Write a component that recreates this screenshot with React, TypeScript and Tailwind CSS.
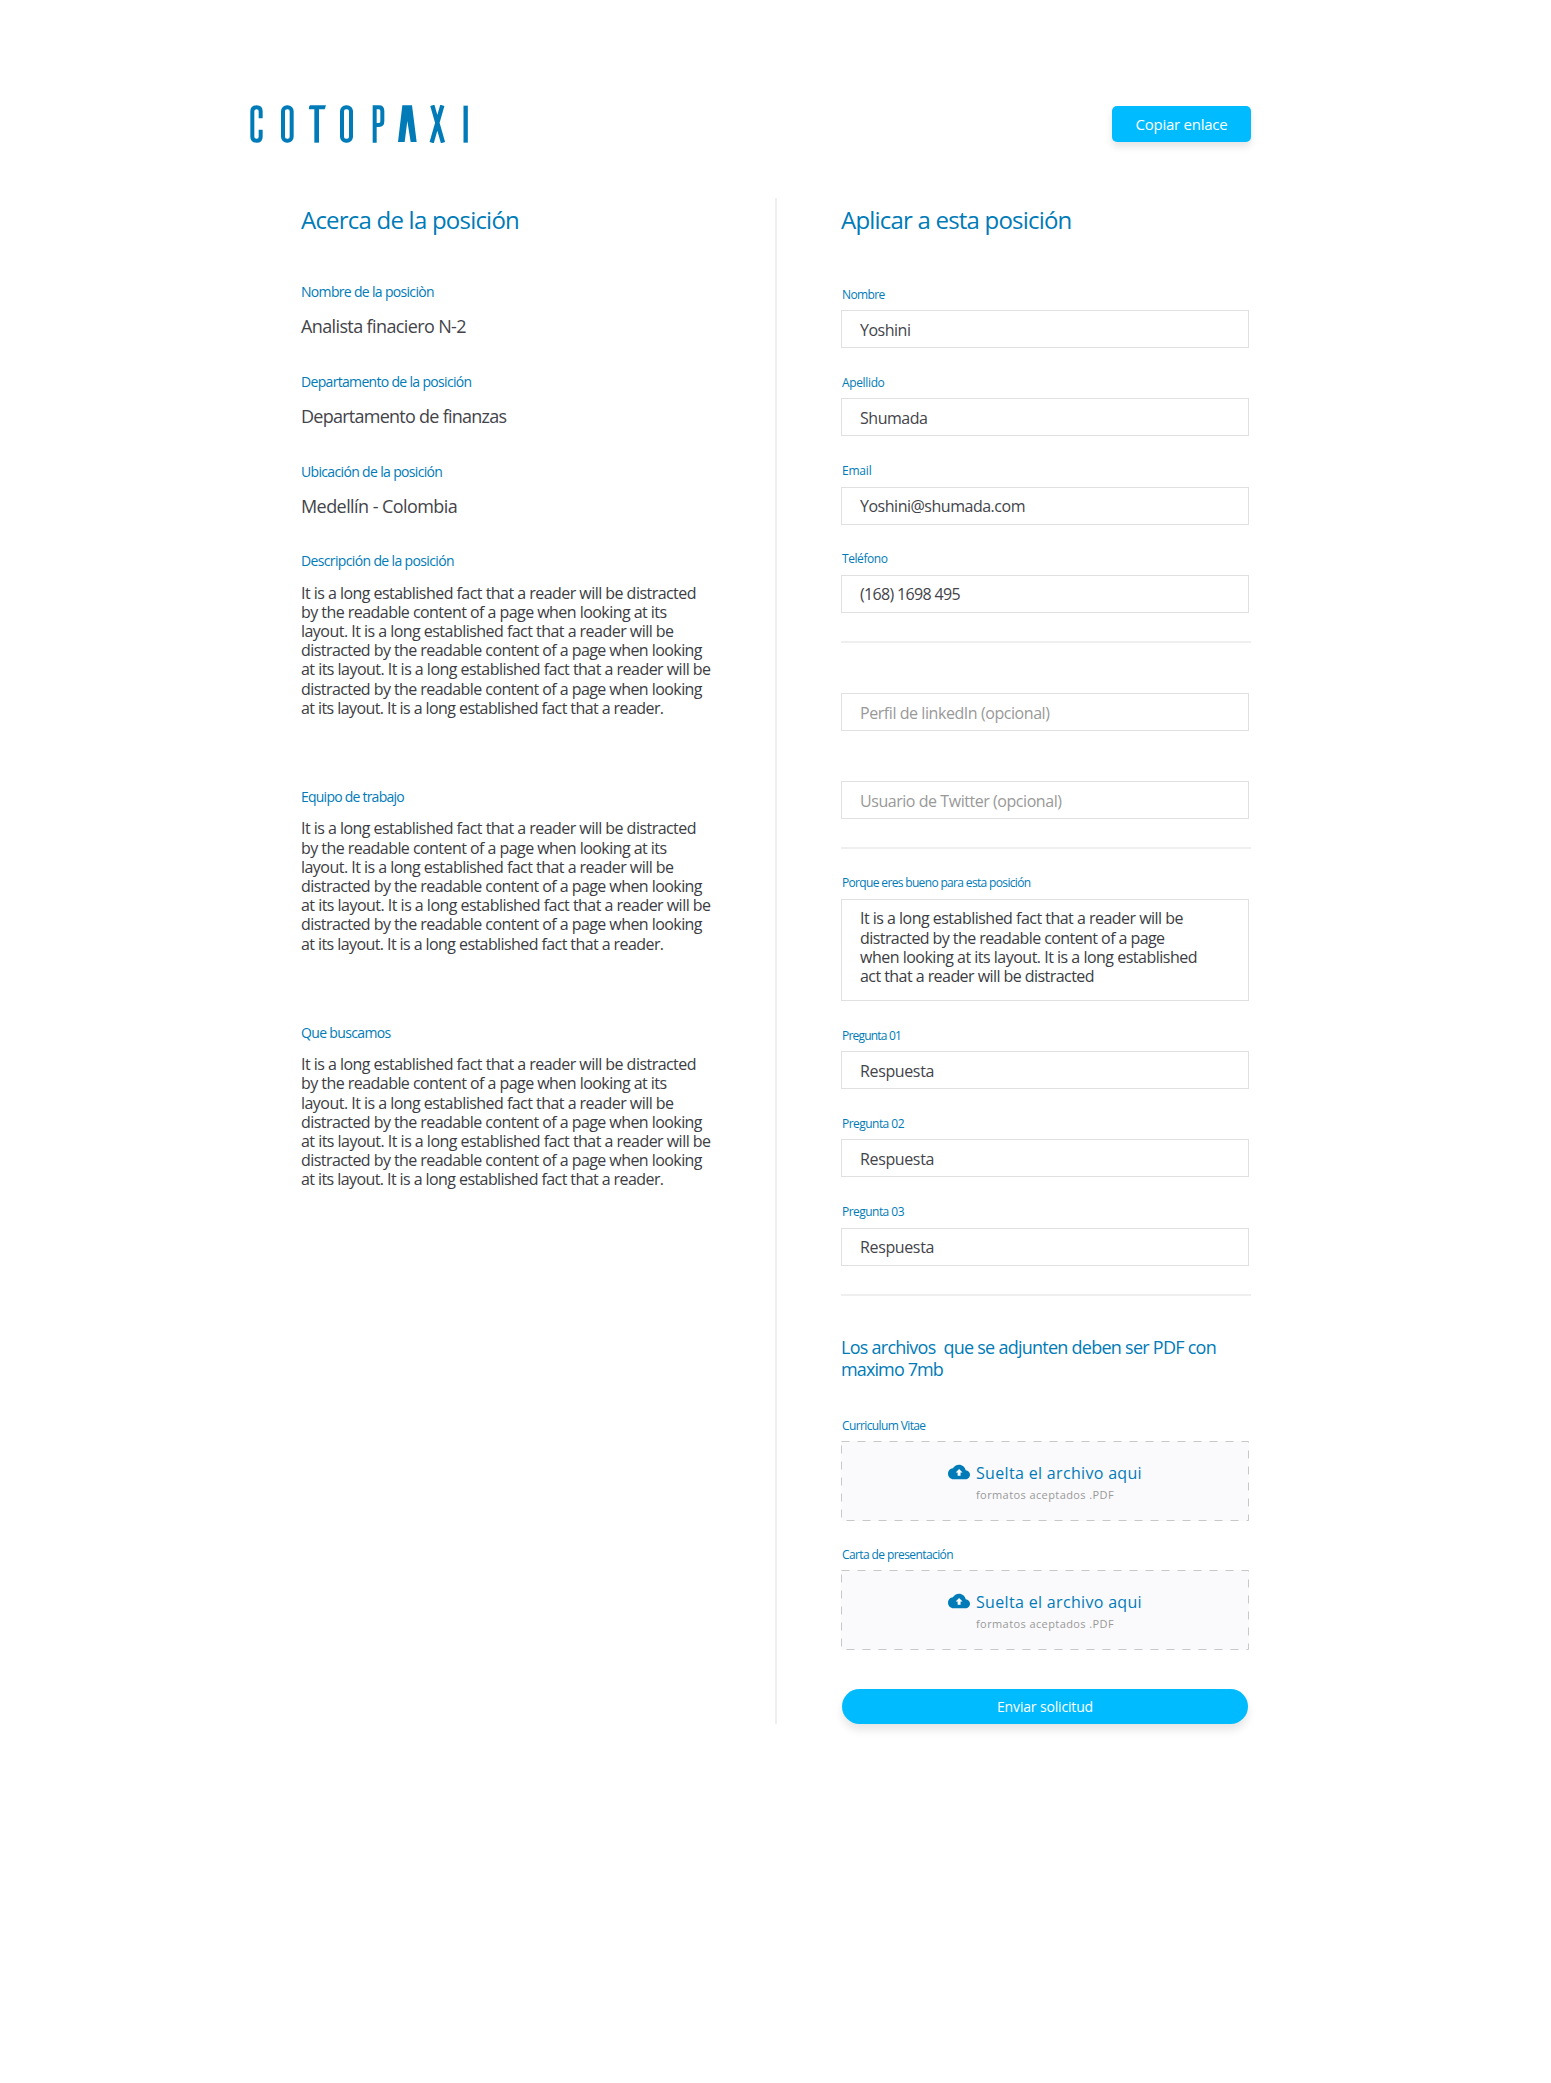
type Line = { text: string; track: string };

const PARAGRAPH: Line[] = [
  { text: "It is a long established fact that a reader will be distracted", track: "tracking-[-0.537px]" },
  { text: "by the readable content of a page when looking at its", track: "tracking-[-0.548px]" },
  { text: "layout. It is a long established fact that a reader will be", track: "tracking-[-0.531px]" },
  { text: "distracted by the readable content of a page when looking", track: "tracking-[-0.564px]" },
  { text: "at its layout. It is a long established fact that a reader will be", track: "tracking-[-0.524px]" },
  { text: "distracted by the readable content of a page when looking", track: "tracking-[-0.564px]" },
  { text: "at its layout. It is a long established fact that a reader.", track: "tracking-[-0.58px]" },
];

const ANSWER: Line[] = [
  { text: "It is a long established fact that a reader will be", track: "tracking-[-0.517px]" },
  { text: "distracted by the readable content of a page", track: "tracking-[-0.57px]" },
  { text: "when looking at its layout. It is a long established", track: "tracking-[-0.502px]" },
  { text: "act that a reader will be distracted", track: "tracking-[-0.554px]" },
];

const FACTS: { label: Line; value: Line }[] = [
  {
    label: { text: "Nombre de la posiciòn", track: "tracking-[-0.68px]" },
    value: { text: "Analista finaciero N-2", track: "tracking-[-0.62px]" },
  },
  {
    label: { text: "Departamento de la posición", track: "tracking-[-0.68px]" },
    value: { text: "Departamento de finanzas", track: "tracking-[-0.74px]" },
  },
  {
    label: { text: "Ubicación de la posición", track: "tracking-[-0.66px]" },
    value: { text: "Medellín - Colombia", track: "tracking-[-0.57px]" },
  },
];

const SECTIONS: Line[] = [
  { text: "Descripción de la posición", track: "tracking-[-0.64px]" },
  { text: "Equipo de trabajo", track: "tracking-[-0.77px]" },
  { text: "Que buscamos", track: "tracking-[-0.65px]" },
];

const CONTACT: { label: Line; value: Line }[] = [
  {
    label: { text: "Nombre", track: "tracking-[-0.643px]" },
    value: { text: "Yoshini", track: "tracking-[-0.487px]" },
  },
  {
    label: { text: "Apellido", track: "tracking-[-0.354px]" },
    value: { text: "Shumada", track: "tracking-[-0.469px]" },
  },
  {
    label: { text: "Email", track: "tracking-[-0.203px]" },
    value: { text: "Yoshini@shumada.com", track: "tracking-[-0.484px]" },
  },
  {
    label: { text: "Teléfono", track: "tracking-[-0.432px]" },
    value: { text: "(168) 1698 495", track: "tracking-[-0.66px]" },
  },
];

const QUESTIONS: Line[] = [
  { text: "Pregunta 01", track: "tracking-[-0.808px]" },
  { text: "Pregunta 02", track: "tracking-[-0.536px]" },
  { text: "Pregunta 03", track: "tracking-[-0.536px]" },
];

function Logo() {
  return (
    <svg
      className="h-[38px] w-[220px] fill-none stroke-[#007bb8]"
      viewBox="0 0 660 114"
      strokeWidth="12"
      role="img"
      aria-label="Cotopaxi"
    >
      <path d="M32 40V19Q32 7 20 7Q7 7 7 19V95Q7 107 20 107Q32 107 32 95V74" />
      <rect x="99" y="7" width="26" height="100" rx="12" />
      <path d="M180 1H228L224 13H177V5Z" className="fill-[#007bb8] stroke-none" />
      <path d="M200 10V113" strokeWidth="14" />
      <rect x="276" y="7" width="27" height="100" rx="12" />
      <path d="M374 113V7H387Q397 7 397 18V49Q397 60 387 60H380" />
      <path d="M444 111L457 1H486L500 111H482L472 48L464 111Z" className="fill-[#007bb8] stroke-none" />
      <path d="M547 1L579 113M577 1L545 113" strokeWidth="13" />
      <path d="M647 2V113" strokeWidth="13" />
    </svg>
  );
}

function UploadIcon() {
  return (
    <svg className="mt-5 h-[22px] w-[22px]" viewBox="0 0 24 24">
      <path
        className="fill-[#007bb8]"
        d="M19.35 10.04C18.67 6.59 15.64 4 12 4 9.11 4 6.6 5.64 5.35 8.04 2.34 8.36 0 10.91 0 14c0 3.31 2.69 6 6 6h13c2.76 0 5-2.24 5-5 0-2.64-2.05-4.78-4.65-4.96z"
      />
      <path className="fill-white" d="M12.1 8.7l3.8 3.9h-2.2V16h-3.2v-3.4H8.3z" />
    </svg>
  );
}

function FieldLabel({ label }: { label: Line }) {
  return <div className={`pl-px text-[12px] leading-[17px] text-[#007bb8] ${label.track}`}>{label.text}</div>;
}

function Box({ value, muted = false }: { value: Line; muted?: boolean }) {
  return (
    <div
      className={`flex h-[38px] items-center border border-[#e0e0e0] pt-px pl-[18px] text-[16px] leading-[22px] ${
        muted ? "text-[#999999]" : "text-[#43444a]"
      } ${value.track}`}
    >
      {value.text}
    </div>
  );
}

function Field({ label, value }: { label: Line; value: Line }) {
  return (
    <div className="flex flex-col gap-[7.4px]">
      <FieldLabel label={label} />
      <Box value={value} />
    </div>
  );
}

function Rule() {
  return <div className="mt-7 h-[2px] w-[410px] bg-[#efefef]" />;
}

function DropZone() {
  return (
    <div className="relative flex h-[80px] gap-[6px] bg-[#fafafc] pl-[107px]">
      <svg className="absolute inset-0 h-full w-full" viewBox="0 0 408 80">
        <rect
          x="0.5"
          y="0.5"
          width="407"
          height="79"
          className="fill-none stroke-[#c8c8c8]"
          strokeDasharray="8 8"
        />
      </svg>
      <UploadIcon />
      <div className="pt-[21px]">
        <div className="text-[16px] leading-[22px] tracking-[0.327px] text-[#007bb8]">Suelta el archivo aqui</div>
        <div className="mt-[3px] text-[11px] leading-[15px] tracking-[0.405px] text-[#999999]">
          formatos aceptados .PDF
        </div>
      </div>
    </div>
  );
}

export default function App() {
  return (
    <div className="h-[2083px] w-[1551px] overflow-hidden bg-white font-['Open_Sans',sans-serif] whitespace-pre">
      <header className="flex h-[198px] items-start justify-between pr-[300px] pl-[250px]">
        <div className="pt-[104.5px]">
          <Logo />
        </div>
        <button className="mt-[106px] h-[36px] w-[139px] rounded-[5px] bg-[#00bbff] text-[15px] leading-[20px] tracking-[-0.25px] text-white shadow-[0_5px_7px_rgba(0,0,0,0.1)]">
          Copiar enlace
        </button>
      </header>

      <main className="flex h-[1526px]">
        <section className="w-[775px] pt-[5px] pl-[301px]">
          <h2 className="text-[24px] leading-[33px] tracking-[-0.78px] text-[#007bb8]">Acerca de la posición</h2>
          <div className="mt-[46px] flex flex-col gap-[34px]">
            {FACTS.map(({ label, value }) => (
              <div key={label.text} className="flex flex-col gap-[13px]">
                <div className={`text-[14px] leading-[19px] text-[#007bb8] ${label.track}`}>{label.text}</div>
                <div className={`text-[18px] leading-[24px] text-[#43444a] ${value.track}`}>{value.text}</div>
              </div>
            ))}
          </div>
          <div className="mt-[33px]">
            {SECTIONS.map((title) => (
              <div key={title.text} className="h-[235.8px]">
                <h3 className={`text-[14px] leading-[19px] text-[#007bb8] ${title.track}`}>{title.text}</h3>
                <p className="mt-[13.5px] text-[16px] leading-[19.2px] text-[#3c3d43]">
                  {PARAGRAPH.map((line, i) => (
                    <span key={i} className={`block ${line.track}`}>
                      {line.text}
                    </span>
                  ))}
                </p>
              </div>
            ))}
          </div>
        </section>

        <div className="w-[2px] bg-[#efefef]" />

        <section className="ml-[64px] w-[408px] pt-[5px]">
          <h2 className="text-[24px] leading-[33px] tracking-[-0.796px] text-[#007bb8]">Aplicar a esta posición</h2>
          <div className="mt-[50px] flex flex-col gap-[25.7px]">
            {CONTACT.map(({ label, value }) => (
              <Field key={label.text} label={label} value={value} />
            ))}
          </div>
          <Rule />
          <div className="mt-[50.4px] flex flex-col gap-[50px]">
            <Box muted value={{ text: "Perfil de linkedIn (opcional)", track: "tracking-[-0.435px]" }} />
            <Box muted value={{ text: "Usuario de Twitter (opcional)", track: "tracking-[-0.45px]" }} />
          </div>
          <Rule />
          <div className="mt-[25px] flex flex-col gap-2">
            <FieldLabel label={{ text: "Porque eres bueno para esta posición", track: "tracking-[-0.657px]" }} />
            <div className="h-[102px] border border-[#e0e0e0] pt-[9.4px] pl-[18px] text-[16px] leading-[19.2px] text-[#3c3d43]">
              {ANSWER.map((line) => (
                <div key={line.text} className={line.track}>
                  {line.text}
                </div>
              ))}
            </div>
          </div>
          <div className="mt-[26px] flex flex-col gap-[25.7px]">
            {QUESTIONS.map((label) => (
              <Field key={label.text} label={label} value={{ text: "Respuesta", track: "tracking-[-0.366px]" }} />
            ))}
          </div>
          <Rule />
          <div className="mt-10 text-[18px] leading-[22px] text-[#007bb8]">
            <div className="tracking-[-0.742px]">{"Los archivos  que se adjunten deben ser PDF con"}</div>
            <div className="tracking-[-0.878px]">maximo 7mb</div>
          </div>
          <div className="mt-[37px] flex flex-col gap-[7px]">
            <FieldLabel label={{ text: "Curriculum Vitae", track: "tracking-[-0.616px]" }} />
            <DropZone />
          </div>
          <div className="mt-[25.2px] flex flex-col gap-[7.6px]">
            <FieldLabel label={{ text: "Carta de presentación", track: "tracking-[-0.595px]" }} />
            <DropZone />
          </div>
          <button className="mx-px mt-[38.4px] block h-[35px] w-[406px] rounded-full bg-[#00bbff] pt-px text-[14px] leading-[19px] tracking-[-0.161px] text-white shadow-[0_6px_8px_rgba(0,0,0,0.1)]">
            Enviar solicitud
          </button>
        </section>
      </main>
    </div>
  );
}
